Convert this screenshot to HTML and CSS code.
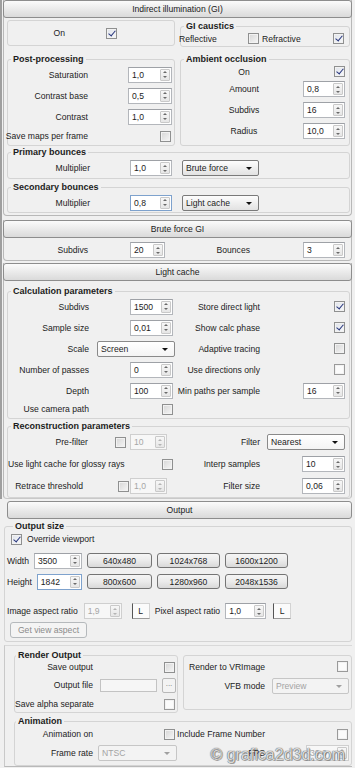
FILE: index.html
```html
<!DOCTYPE html>
<html lang="en">
<head>
<meta charset="utf-8">
<title>Render settings</title>
<link rel="stylesheet" href="styles.css">
</head>
<body>
<div class="upper">
  <section class="rollout gi">
    <div class="hdr">Indirect illumination (GI)</div>
    <div class="rbody">
      <div class="two r1">
        <div class="box onbox"><span class="lb">On</span><span></span><span class="chk on"></span></div>
        <fieldset class="gb caus">
          <legend>GI caustics</legend>
          <div class="caus-row"><span class="t1">Reflective</span><span class="chk"></span><span class="t2">Refractive</span><span class="chk on"></span></div>
        </fieldset>
      </div>
      <div class="two r2">
        <fieldset class="gb pp">
          <legend>Post-processing</legend>
          <div class="g pp-g">
            <span class="lb">Saturation</span><span class="spin s44"><span class="v">1,0</span><span class="ar"></span></span>
            <span class="lb">Contrast base</span><span class="spin s44"><span class="v">0,5</span><span class="ar"></span></span>
            <span class="lb">Contrast</span><span class="spin s44"><span class="v">1,0</span><span class="ar"></span></span>
            <span class="lb">Save maps per frame</span><span class="chk end1"></span>
          </div>
        </fieldset>
        <fieldset class="gb ao">
          <legend>Ambient occlusion</legend>
          <div class="g ao-g">
            <span class="lcn">On</span><span class="chk end0 on"></span>
            <span class="lcn">Amount</span><span class="spin s42"><span class="v">0,8</span><span class="ar"></span></span>
            <span class="lcn">Subdivs</span><span class="spin s42"><span class="v">16</span><span class="ar"></span></span>
            <span class="lcn">Radius</span><span class="spin s42"><span class="v">10,0</span><span class="ar"></span></span>
          </div>
        </fieldset>
      </div>
      <fieldset class="gb bnc prim">
        <legend>Primary bounces</legend>
        <div class="g bn-g">
          <span class="lb">Multiplier</span><span class="spin s42"><span class="v">1,0</span><span class="ar"></span></span><span class="combo">Brute force</span>
        </div>
      </fieldset>
      <fieldset class="gb bnc sec">
        <legend>Secondary bounces</legend>
        <div class="g bn-g">
          <span class="lb">Multiplier</span><span class="spin s42 focus"><span class="v">0,8</span><span class="ar"></span></span><span class="combo">Light cache</span>
        </div>
      </fieldset>
    </div>
  </section>

  <section class="rollout brute">
    <div class="hdr">Brute force GI</div>
    <div class="g bf-g">
      <span class="lb">Subdivs</span><span class="spin s35"><span class="v">20</span><span class="ar"></span></span>
      <span class="lb b2">Bounces</span><span class="spin s42"><span class="v">3</span><span class="ar"></span></span>
    </div>
  </section>

  <section class="rollout lcache">
    <div class="hdr">Light cache</div>
    <div class="rbody">
      <fieldset class="gb calc">
        <legend>Calculation parameters</legend>
        <div class="g calc-g">
          <span class="lb">Subdivs</span><span class="spin s43 e2"><span class="v">1500</span><span class="ar"></span></span>
          <span class="lb r">Store direct light</span><span class="chk end0 on"></span>
          <span class="lb">Sample size</span><span class="spin s43 e2"><span class="v">0,01</span><span class="ar"></span></span>
          <span class="lb r">Show calc phase</span><span class="chk end0 on"></span>
          <span class="lb">Scale</span><span class="combo white">Screen</span>
          <span class="lb r">Adaptive tracing</span><span class="chk end0"></span>
          <span class="lb">Number of passes</span><span class="spin s43 e2"><span class="v">0</span><span class="ar"></span></span>
          <span class="lb r">Use directions only</span><span class="chk end0 w"></span>
          <span class="lb">Depth</span><span class="spin s43 e2"><span class="v">100</span><span class="ar"></span></span>
          <span class="lb r">Min paths per sample</span><span class="spin s42"><span class="v">16</span><span class="ar"></span></span>
          <span class="lb">Use camera path</span><span class="chk end2"></span><span></span><span></span>
        </div>
      </fieldset>
      <fieldset class="gb recon">
        <legend>Reconstruction parameters</legend>
        <div class="g rc-g">
          <span class="lb">Pre-filter</span><span class="chk st1"></span><span class="spin s37 dis"><span class="v">10</span><span class="ar"></span></span>
          <span class="lb r">Filter</span><span class="combo white">Nearest</span>
          <span class="lspan">Use light cache for glossy rays</span><span class="chk end2"></span>
          <span class="lb r">Interp samples</span><span class="spin s43 je"><span class="v">10</span><span class="ar"></span></span>
          <span class="lb rt">Retrace threshold</span><span class="chk st4"></span><span class="spin s37 dis"><span class="v">1,0</span><span class="ar"></span></span>
          <span class="lb r">Filter size</span><span class="spin s43 je"><span class="v">0,06</span><span class="ar"></span></span>
        </div>
      </fieldset>
    </div>
  </section>
</div>

<section class="out">
  <div class="hdr">Output</div>
  <fieldset class="gb osize">
    <legend>Output size</legend>
    <div class="ov"><span class="chk on"></span><span>Override viewport</span></div>
    <div class="wh">
      <div class="dim"><span>Width</span><span class="spin"><span class="v">3500</span><span class="ar"></span></span></div>
      <span class="btn">640x480</span><span class="btn">1024x768</span><span class="btn">1600x1200</span>
      <div class="dim"><span>Height</span><span class="spin focus"><span class="v">1842</span><span class="ar"></span></span></div>
      <span class="btn">800x600</span><span class="btn">1280x960</span><span class="btn">2048x1536</span>
    </div>
    <div class="asp">
      <span>Image aspect ratio</span><span class="spin s38 dis"><span class="v">1,9</span><span class="ar"></span></span><span class="lbtn a1">L</span>
      <span class="pa">Pixel aspect ratio</span><span class="spin s41"><span class="v">1,0</span><span class="ar"></span></span><span class="lbtn a2">L</span>
    </div>
    <div class="gva"><span class="btn dis">Get view aspect</span></div>
  </fieldset>

  <div class="rnd">
    <div class="ro-row">
      <fieldset class="gb ro">
        <legend>Render Output</legend>
        <div class="g ro-g">
          <span class="lb">Save output</span><span class="chk end2"></span>
          <span class="lb">Output file</span><span class="file"><span class="fld"></span><span class="dots">...</span></span>
          <span class="lb">Save alpha separate</span><span class="chk end2 w"></span>
        </div>
      </fieldset>
      <fieldset class="gb vfb">
        <div class="g vfb-g">
          <span class="lb">Render to VRImage</span><span class="chk end1 w"></span>
          <span class="lb">VFB mode</span><span class="combo dis">Preview</span>
        </div>
      </fieldset>
    </div>
    <fieldset class="gb anim">
      <legend>Animation</legend>
      <div class="g an-g">
        <span class="lb">Animation on</span><span class="chk end2"></span>
        <span class="lb">Include Frame Number</span><span class="chk end1 w"></span>
        <span class="lb">Frame rate</span><span class="combo dis ntsc">NTSC</span>
        <span class="lb">FPS</span><span class="spin s43 je dis"><span class="v">30,0</span><span class="ar"></span></span>
      </div>
    </fieldset>
  </div>
</section>

<div class="wm">© grafica2d3d.com</div>
</body>
</html>
```

FILE: styles.css
```css
* { box-sizing: border-box; }
html, body { margin: 0; padding: 0; }
body {
  width: 355px; height: 768px; overflow: hidden; position: relative;
  background: #f0f0f0;
  font-family: "Liberation Sans", Arial, sans-serif;
  font-size: 8.6px; color: #1c1c1c;
}

/* group boxes (base rules first so later rules override) */
.gb {
  margin: 0; padding: 0; min-width: 0;
  border: 1px solid #d4d4d4; border-radius: 3px;
}
.gb legend {
  font-weight: bold; font-size: 9px; line-height: 10px;
  padding: 0 2px; margin-left: 3px; color: #1c1c1c; text-align: left;
}
.box { border: 1px solid #d4d4d4; border-radius: 3px; }

/* frames */
.upper { width: 352px; border-left: 2px solid #9f9f9f; padding-left: 1px; }
.rollout { border: 1px solid #b8b8b8; border-top: none; border-radius: 0 0 4px 4px; }
.hdr {
  height: 18px; margin: 0 -1px; border: 1px solid #8d8d8d; border-radius: 3px;
  background: linear-gradient(#fbfbfb, #ececec 45%, #dadada);
  text-align: center; line-height: 16px; color: #1a1a1a;
}
.gi .rbody { padding: 2px 1px 2px 3px; }
.brute { margin-top: 4px; }
.lcache { margin-top: 2px; border-bottom-color: #c9c9c9; }
.lcache .rbody { padding: 5px 1px 0 3px; }

.two { display: grid; grid-template-columns: 168px 170px; column-gap: 5px; align-items: start; }
.r2 { margin-top: 7px; align-items: stretch; }

.g { display: grid; align-items: center; }
.lb { text-align: right; white-space: nowrap; justify-self: end; }
.lcn { text-align: center; white-space: nowrap; }

.onbox { height: 26px; display: grid; grid-template-columns: 57px 41px 11px; align-items: center; }
.caus { margin-top: 1px; }
.caus-row { display: flex; align-items: center; height: 15px; }
.caus-row .t1 { width: 69px; margin-left: -2px; }
.caus-row .t2 { width: 71px; margin-left: 3px; }

.pp-g { grid-template-columns: 80px 40px 44px; grid-template-rows: 21px 21px 21px 18px; }
.pp-g .spin { grid-column: 3; }
.pp-g .chk { grid-column: 3; }
.pp-g .lb { grid-column: 1; }

.ao-g { grid-template-columns: 122px 42px; grid-template-rows: 15px 20px 22px 20px; }
.ao-g .lcn { padding-left: 4px; }

.prim { margin-top: 1px; }
.sec { margin-top: 3px; }
.bn-g { grid-template-columns: 122px 52px 77px; padding-top: 1px; grid-template-rows: 20px; }
.sec .bn-g { grid-template-rows: 19px; }
.bn-g .lb { justify-self: stretch; padding-right: 40px; }

.bf-g { grid-template-columns: 123px 35px 138px 42px; height: 22px; padding: 2px 0 0 3px; }
.bf-g .lb { justify-self: stretch; padding-right: 42px; }
.bf-g .b2 { padding-right: 53px; }

.calc-g { grid-template-columns: 89px 78px 128px 42px; grid-template-rows: 21px 21px 21px 21px 21px 16px; padding-bottom: 1px; }
.calc-g .lb { justify-self: stretch; padding-right: 8px; }
.calc-g .lb.r { padding-right: 43px; }
.recon { margin-top: 2px; }
.rc-g { grid-template-columns: 106px 16px 45px 92px 78px; grid-template-rows: 22px 22px 22px; }
.rc-g .lb { justify-self: stretch; padding-right: 26px; }
.rc-g .lb.rt { padding-right: 31px; }
.rc-g .lb.r { padding-right: 7px; }
.rc-g .lspan { grid-column: 1 / 3; white-space: nowrap; }

/* output */
.out { width: 348px; margin: 2px 0 0 4px; }
.out .hdr { margin: 0 0 0 3px; }
.osize { margin-top: 2px; padding: 0 0 3px 2px; }
.osize legend { margin-left: 6px; }
.ov { display: flex; align-items: center; height: 16px; gap: 5px; padding-left: 4px; }
.wh { display: grid; grid-template-columns: 75px 65px 63px 63px; column-gap: 5px; grid-template-rows: 21px 21px; align-items: center; margin-top: 3px; }
.dim { display: flex; align-items: center; gap: 5px; }
.dim .spin { flex: 1; }
.asp { display: flex; align-items: center; height: 22px; margin-top: 8px; }
.asp .spin { margin-left: 6px; }
.a1 { margin-left: 10px; }
.pa { margin-left: 5px; }
.asp .s41 { margin-left: 5px; }
.a2 { margin-left: 7px; }
.gva { height: 16px; padding-left: 3px; }
.gva .btn { width: 77px; height: 16px; }

.rnd { margin-top: 3px; border-left: 1px solid #c9c9c9; border-top: 1px solid #d9d9d9; border-bottom: 1px solid #b9b9b9; padding: 4px 0 0 9px; height: 122px; }
.ro-row { display: grid; grid-template-columns: 164px 169px; column-gap: 5px; align-items: start; }
.ro legend, .anim legend { margin-left: 1px; }
.ro-g { grid-template-columns: 85px 77px; grid-template-rows: 14px 22px 16px; }
.ro-g .lb, .vfb-g .lb, .an-g .lb { justify-self: stretch; padding-right: 7px; }
.vfb { margin-top: 5px; height: 55px; }
.vfb-g { grid-template-columns: 88px 77px; grid-template-rows: 21px 18px; }
.anim { margin-top: 3px; padding-bottom: 2px; }
.an-g { grid-template-columns: 85px 77px 95px 77px; grid-template-rows: 16px 21px; }
.ntsc { margin-left: -2px; }

.file { display: flex; align-items: center; gap: 5px; }
.fld { width: 57px; height: 13px; border: 1px solid #c3c3c3; background: #f6f6f6; }
.dots { width: 14px; height: 15px; border: 1px solid #b8b8b8; border-radius: 2px; background: #f3f3f3; color: #777; text-align: center; line-height: 10px; font-size: 8px; }

/* widgets */
.spin {
  display: flex; height: 16px; background: #fff;
  border: 1px solid #b3b6bb; border-top-color: #9ea1a6;
}
.spin.focus { border-color: #7ea2cd; }
.spin .v { flex: 1; padding-left: 3px; line-height: 14px; white-space: nowrap; }
.spin .ar {
  width: 10px; margin: 1px 1px 1px 0; border: 1px solid #c9c9c9; border-radius: 1px;
  background: linear-gradient(#f7f7f7, #e6e6e6);
  display: flex; flex-direction: column; align-items: center; justify-content: space-around;
}
.spin .ar::before { content: ""; border-left: 2px solid transparent; border-right: 2px solid transparent; border-bottom: 2px solid #6a6a6a; }
.spin .ar::after { content: ""; border-left: 2px solid transparent; border-right: 2px solid transparent; border-top: 2px solid #6a6a6a; }
.spin.dis { background: #f7f7f7; border-color: #cfcfcf; color: #a6a6a6; }
.spin.dis .ar::before { border-bottom-color: #b4b4b4; }
.spin.dis .ar::after { border-top-color: #b4b4b4; }
.s35 { width: 35px; } .s37 { width: 37px; } .s38 { width: 38px; } .s41 { width: 41px; }
.s42 { width: 42px; } .s43 { width: 43px; } .s44 { width: 44px; }
.e2 { justify-self: end; margin-right: 2px; }
.je { justify-self: end; }

.chk {
  width: 11px; height: 11px; display: inline-flex; align-items: center; justify-content: center;
  border: 1px solid #8f9090; background: linear-gradient(135deg, #d6d6d6, #f6f6f6);
  box-shadow: inset 0 0 0 1px #f2f2f2;
}
.chk.w { background: #fbfbfb; border-color: #9a9a9a; }
.chk.on { background: linear-gradient(135deg, #dfe3ea, #f7f8fa); }
.chk.on::after {
  content: ""; width: 3px; height: 6px; margin-top: -2px;
  border: solid #27357c; border-width: 0 1.6px 1.6px 0; transform: rotate(40deg);
}
.end0 { justify-self: end; }
.end1 { justify-self: end; margin-right: 1px; }
.end2 { justify-self: end; margin-right: 2px; }
.st1 { margin-left: 1px; }
.st4 { margin-left: 4px; }

.combo {
  position: relative; display: flex; align-items: center; height: 16px; padding-left: 3px;
  border: 1px solid #7a7a7a; border-radius: 2px; white-space: nowrap;
  background: linear-gradient(#fdfdfd, #efefef 50%, #e2e2e2);
}
.combo.white { background: linear-gradient(#ffffff, #f4f4f4); border-color: #8a8a8a; }
.combo::after {
  content: ""; position: absolute; right: 6px; top: 6px;
  border-left: 3px solid transparent; border-right: 3px solid transparent; border-top: 3px solid #111;
}
.combo.dis { background: #f3f3f3; border-color: #c6c6c6; color: #a3a3a3; }
.combo.dis::after { border-top-color: #a0a0a0; }

.btn {
  display: flex; align-items: center; justify-content: center; height: 15px;
  border: 1px solid #747474; border-radius: 3px;
  background: linear-gradient(#f5f5f5, #ebebeb 50%, #d9d9d9);
}
.btn.dis { border-color: #b5b9bc; background: #f4f4f4; color: #8b8b8b; }
.lbtn {
  display: flex; align-items: center; justify-content: center; height: 16px; width: 18px;
  border: 1px solid #d3d3d3; border-left-color: #555; border-bottom-color: #9a9a9a; background: #fbfbfb;
}

.wm {
  position: absolute; right: 10px; bottom: 4px;
  font-family: "Liberation Sans", Arial, sans-serif; font-size: 16px;
  color: rgba(255,255,255,0.8);
  text-shadow: 0 0 1px #555, 0 0 1px #555, 1px 1px 0 rgba(90,90,90,0.45);
}
```
